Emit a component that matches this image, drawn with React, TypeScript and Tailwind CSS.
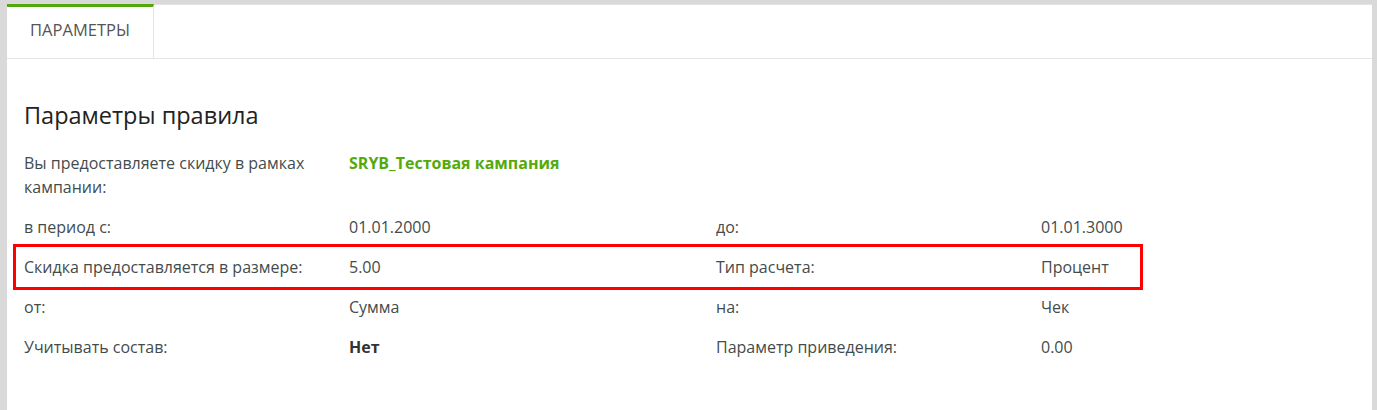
import React from 'react';

const rows: [string, React.ReactNode, string?, string?][] = [
  ['в период с:', '01.01.2000', 'до:', '01.01.3000'],
  ['Скидка предоставляется в размере:', '5.00', 'Тип расчета:', 'Процент'],
  ['от:', 'Сумма', 'на:', 'Чек'],
  ['Учитывать состав:', <b className="font-bold text-[#333]">Нет</b>, 'Параметр приведения:', '0.00'],
];

const Row: React.FC<{ cells: [string, React.ReactNode, string?, string?]; marked?: boolean }> = ({ cells, marked }) => (
  <div className="relative grid grid-cols-[325px_367px_325px_1fr] py-2 leading-6">
    <span>{cells[0]}</span>
    <span>{cells[1]}</span>
    <span>{cells[2]}</span>
    <span>{cells[3]}</span>
    {marked && (
      <div className="pointer-events-none absolute -left-[11px] -top-[3px] -bottom-[3px] w-[1130px] border-[3px] border-[#ff0000]" />
    )}
  </div>
);

export default function App() {
  return (
    <div className="h-[410px] w-[1377px] bg-[#d9d9d9] pl-[7px] pr-[5px] pt-[4px] font-['Open_Sans',sans-serif] text-[16px] text-[#434c4c]">
      <div className="h-full bg-white">
        <div className="flex h-[55px] border-b border-[#e6e6e6]">
          <div className="w-[147px] border-r border-[#e6e6e6] border-t-[3px] border-t-[#52a80c] pt-[1px]">
            <div className="flex h-full items-center justify-center pb-[5px] text-[16.5px] uppercase text-[#555]">
              Параметры
            </div>
          </div>
          <div className="flex-1 border-t border-[#e3e3e3]" />
        </div>
        <div className="pl-[17px] pt-[40px]">
          <h2 className="mb-[12px] text-[23.5px] leading-[32px] text-[#222]">Параметры правила</h2>
          <div className="grid grid-cols-[325px_1fr] py-2 leading-6">
            <span className="w-[300px]">Вы предоставляете скидку в рамках кампании:</span>
            <span className="font-bold text-[#55aa0a]">SRYB_Тестовая кампания</span>
          </div>
          {rows.map((r, i) => (
            <Row key={i} cells={r} marked={i === 1} />
          ))}
        </div>
      </div>
    </div>
  );
}
